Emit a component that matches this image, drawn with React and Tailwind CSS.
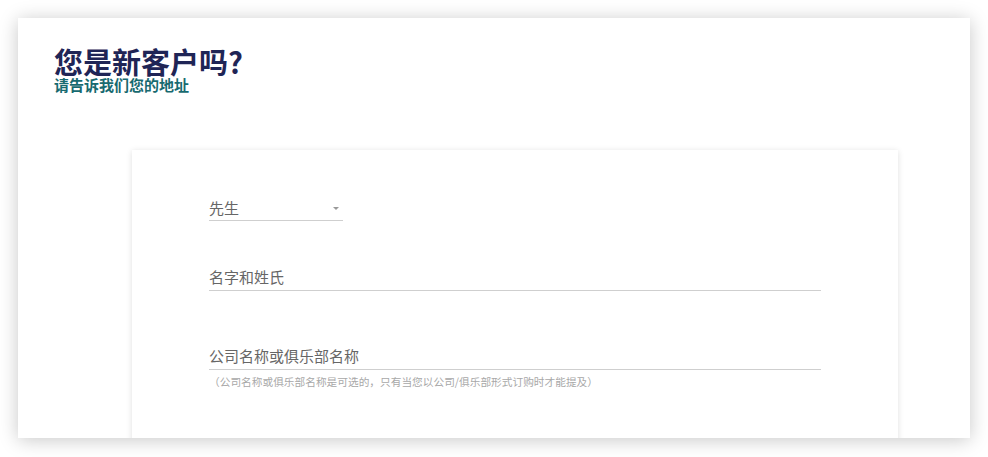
export default function App() {
  return (
    <div className="h-[457px] overflow-hidden bg-white p-[18px] font-['Noto_Sans_CJK_SC','Noto_Sans',sans-serif]">
      {/* Outer panel */}
      <div className="h-[420px] overflow-hidden bg-white pl-[36px] pt-[28px] shadow-[0_2px_18px_rgba(0,0,0,0.22)]">
        <h1 className="text-[29px] font-bold leading-[30px] text-[#1f2556]">您是新客户吗?</h1>
        <p className="text-[15px] font-bold leading-[18px] text-[#176a70]">请告诉我们您的地址</p>

        {/* Form card */}
        <div className="ml-[78px] mt-[56px] h-[300px] w-[766px] bg-white px-[77px] pt-[43px] shadow-[0_1px_6px_rgba(0,0,0,0.13)]">
          <div className="flex h-[28px] w-[134px] items-end justify-between border-b border-[#cfcfcf] pb-[2px] pr-[4px]">
            <span className="text-[15px] leading-[20px] text-[#666]">先生</span>
            <span className="mb-[8px] h-0 w-0 border-x-[3px] border-t-[3px] border-x-transparent border-t-[#999]" />
          </div>

          <div className="mt-[42px] flex h-[28px] items-end border-b border-[#cfcfcf] pb-[3px]">
            <span className="text-[15px] leading-[20px] text-[#666]">名字和姓氏</span>
          </div>

          <div className="mt-[51px] flex h-[28px] items-end border-b border-[#cfcfcf] pb-[3px]">
            <span className="text-[15px] leading-[20px] text-[#666]">公司名称或俱乐部名称</span>
          </div>
          <p className="mt-[5px] text-[10.7px] leading-[14px] text-[#a8a8a8]">
            （公司名称或俱乐部名称是可选的，只有当您以公司/俱乐部形式订购时才能提及）
          </p>
        </div>
      </div>
    </div>
  )
}
